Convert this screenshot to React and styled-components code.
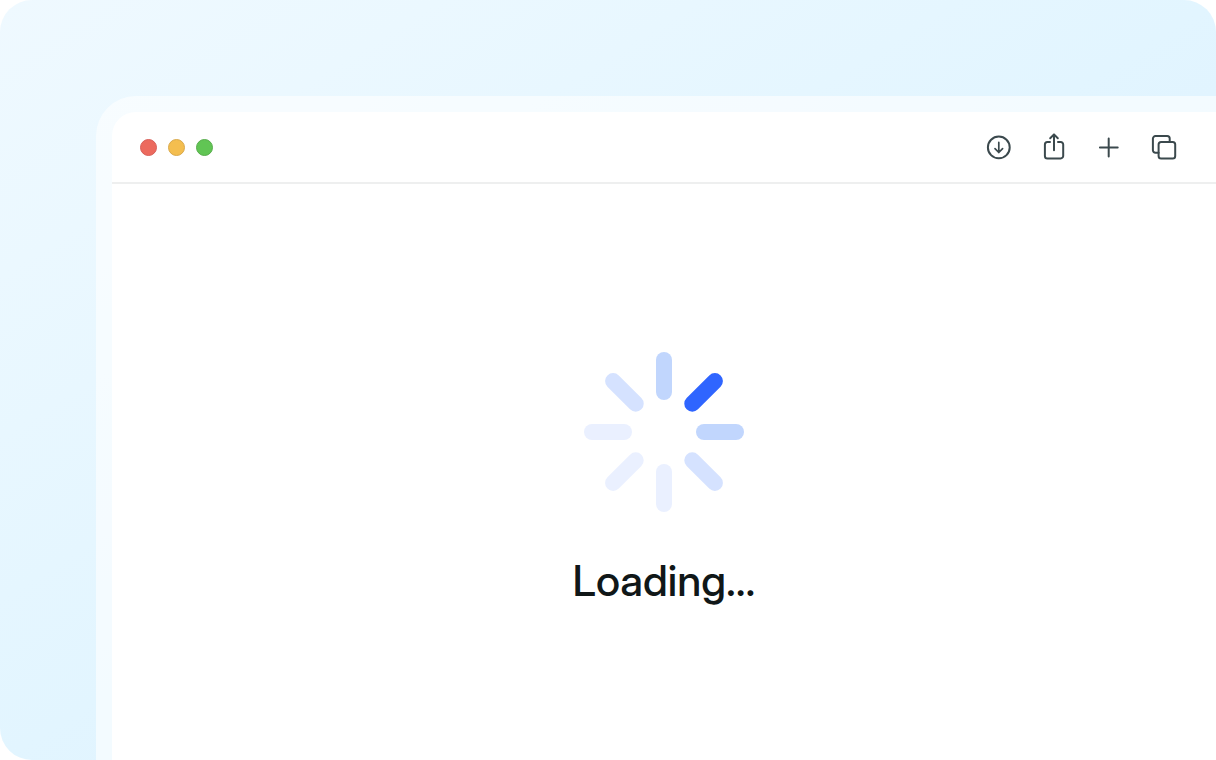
import React from "react";
import styled, { createGlobalStyle } from "styled-components";

const GlobalStyle = createGlobalStyle`
    * {
        box-sizing: border-box;
    }

    body {
        margin: 0;
        background: #ffffff;
        font-family: "Inter Display", Inter, "Liberation Sans", sans-serif;
    }
`;

const Backdrop = styled.div`
    display: flex;
    min-height: 100vh;
    padding: 96px 0 0 96px;
    border-radius: 32px 32px 0 32px;
    background: linear-gradient(to bottom right, #eff9ff 0%, #ebf8ff 18%, #e2f5ff 50%, #dff2ff 68%, #dff2ff 100%);
    overflow: hidden;
`;

const WindowFrame = styled.div`
    display: flex;
    flex: 1;
    padding: 16px 0 0 16px;
    border-radius: 40px 0 0 0;
    background: rgba(255, 255, 255, 0.6);
`;

const BrowserWindow = styled.main`
    display: flex;
    flex: 1;
    flex-direction: column;
    border-radius: 24px 0 0 0;
    background: #ffffff;
`;

const Toolbar = styled.header`
    display: flex;
    align-items: center;
    justify-content: space-between;
    height: 72px;
    padding: 0 36px 0 28px;
    border-bottom: 2px solid #eeefef;
`;

const WindowControls = styled.div`
    display: flex;
    gap: 11px;
`;

const WindowControl = styled.button`
    width: 17px;
    height: 17px;
    padding: 0;
    border: 1px solid ${(props) => props.$border};
    border-radius: 50%;
    background: ${(props) => props.$color};
`;

const ToolbarActions = styled.div`
    display: flex;
    gap: 23px;
`;

const ToolbarButton = styled.button`
    width: 32px;
    height: 32px;
    padding: 0;
    border: none;
    background: none;
    color: #3b494d;
`;

const ToolbarIcon = styled.svg`
    display: block;
    width: 32px;
    height: 32px;
    fill: none;
    stroke: currentColor;
    stroke-width: 2;
    stroke-linecap: round;
    stroke-linejoin: round;
`;

const LoadingContent = styled.section`
    display: flex;
    flex: 1;
    flex-direction: column;
    align-items: center;
    gap: 40px;
    padding-top: 168px;
`;

const Spinner = styled.svg`
    width: 160px;
    height: 160px;
`;

const LoadingText = styled.div`
    color: #101718;
    font-size: 43px;
    font-weight: 500;
    line-height: 56px;
`;

const controls = [
    { label: "Close", color: "#ec6a5e", border: "#d8605a" },
    { label: "Minimize", color: "#f4be4f", border: "#d9a94c" },
    { label: "Zoom", color: "#61c554", border: "#58ad4c" },
];

const actions = [
    {
        label: "Downloads",
        icon: (
            <>
                <circle cx="15.8" cy="16.4" r="10.9" />
                <path d="M15.8 11.4v10M12 17.7l3.8 3.8 3.8-3.8" strokeWidth="1.7" />
            </>
        ),
    },
    {
        label: "Share",
        icon: (
            <path d="M12 11H9.4a2.5 2.5 0 0 0-2.5 2.5v11.4a2.5 2.5 0 0 0 2.5 2.5h13.3a2.5 2.5 0 0 0 2.5-2.5V13.5a2.5 2.5 0 0 0-2.5-2.5H20M16 19.2V3.5M12.2 7.2 16 3.4l3.8 3.8" />
        ),
    },
    {
        label: "New tab",
        icon: <path d="M15.7 7.5v18M6.9 16.5h17.8" />,
    },
    {
        label: "Tab overview",
        icon: (
            <>
                <rect x="10.6" y="10.9" width="16.6" height="16.6" rx="2.5" />
                <path d="M10.6 21.8H7.4a2.5 2.5 0 0 1-2.5-2.5V7.6a2.5 2.5 0 0 1 2.5-2.5h11.8a2.5 2.5 0 0 1 2.5 2.5v3.3" />
            </>
        ),
    },
];

// clockwise from the top
const spokes = [
    "#c1d6fd",
    "#2f65ff",
    "#c1d6fd",
    "#d5e2ff",
    "#eaf0ff",
    "#eaf0ff",
    "#eaf0ff",
    "#d5e2ff",
];

function App() {
    return (
        <>
            <GlobalStyle />
            <Backdrop>
                <WindowFrame>
                    <BrowserWindow>
                        <Toolbar>
                            <WindowControls>
                                {controls.map((control) => (
                                    <WindowControl
                                        key={control.label}
                                        type="button"
                                        aria-label={control.label}
                                        $color={control.color}
                                        $border={control.border}
                                    />
                                ))}
                            </WindowControls>
                            <ToolbarActions>
                                {actions.map((action) => (
                                    <ToolbarButton
                                        key={action.label}
                                        type="button"
                                        aria-label={action.label}
                                    >
                                        <ToolbarIcon viewBox="0 0 32 32" aria-hidden="true">
                                            {action.icon}
                                        </ToolbarIcon>
                                    </ToolbarButton>
                                ))}
                            </ToolbarActions>
                        </Toolbar>
                        <LoadingContent>
                            <Spinner viewBox="0 0 160 160" aria-hidden="true">
                                {spokes.map((color, index) => (
                                    <rect
                                        key={index}
                                        x="72"
                                        y="0"
                                        width="16"
                                        height="48"
                                        rx="8"
                                        fill={color}
                                        transform={`rotate(${index * 45} 80 80)`}
                                    />
                                ))}
                            </Spinner>
                            <LoadingText role="status">Loading...</LoadingText>
                        </LoadingContent>
                    </BrowserWindow>
                </WindowFrame>
            </Backdrop>
        </>
    );
}

export default App;
